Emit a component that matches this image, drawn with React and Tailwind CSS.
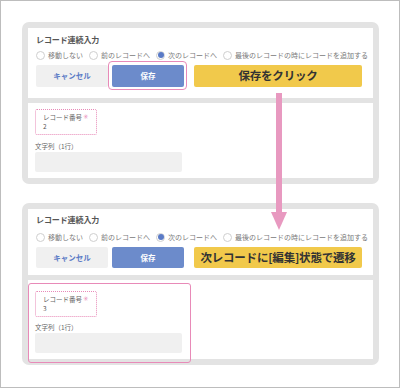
import React from "react";

function Radio({ label, checked }) {
  return (
    <div className="flex items-center gap-[3px]">
      <span className="w-[9px] h-[9px] rounded-full border border-[#cfcfcf] bg-white flex items-center justify-center">
        {checked && <span className="w-[6px] h-[6px] rounded-full bg-[#5b7bc6]" />}
      </span>
      <span className="text-[7px] leading-[10px] text-[#7a7a7a] whitespace-nowrap">{label}</span>
    </div>
  );
}

function Card({ top, banner, value, highlightSave }) {
  const s1 = top
    ? "h-[70px] pt-[7px]"
    : "h-[66px] pt-[6px]";
  const radioMt = top ? "mt-[5px]" : "mt-[7px]";
  const btnH = top ? "h-[22px]" : "h-[21px]";
  const s2 = top ? "h-[75px] pt-[6px]" : "h-[79px] pt-[11px]";
  const labelMt = top ? "mt-[7px]" : "mt-[6px]";
  return (
    <div className="w-[357px] rounded-[7px] bg-[#e3e3e3] p-[6px] flex flex-col gap-[5px]">
      <div className={`bg-white ${s1} pl-[8px] flex flex-col`}>
        <div className="text-[8px] leading-[10px] font-bold text-[#555] tracking-[-0.1px]">レコード連続入力</div>
        <div className={`${radioMt} flex items-center gap-[6px]`}>
          <Radio label="移動しない" />
          <Radio label="前のレコードへ" />
          <Radio label="次のレコードへ" checked />
          <Radio label="最後のレコードの時にレコードを追加する" />
        </div>
        <div className={`mt-[5px] flex items-center ${btnH}`}>
          <div className="w-[72px] h-full rounded-[2px] bg-[#f0f0f0] flex items-center justify-center text-[7.5px] text-[#5b7bc6] font-bold">キャンセル</div>
          <div className="relative ml-[4px] w-[72px] h-full">
            <div className="w-full h-full rounded-[2px] bg-[#6c8bcb] flex items-center justify-center text-[7.5px] text-white font-bold">保存</div>
            {highlightSave && (
              <span className="absolute -left-[4px] -top-[4px] -right-[3px] -bottom-[3px] rounded-[4px] border-[1.5px] border-[#e88ab8]" />
            )}
          </div>
          <div className="ml-[10px] w-[168px] h-full rounded-[2px] bg-[#f1c94b] flex items-center justify-center text-[#333] font-bold whitespace-nowrap text-[11.5px] tracking-[-0.2px]">
            {banner}
          </div>
        </div>
      </div>
      <div className={`bg-white ${s2} pl-[7px] flex flex-col`}>
        <div className="w-[62px] h-[26px] border-[1.5px] border-dotted border-[#e88ab8] rounded-[2px] pl-[7px] pt-[3px] flex flex-col">
          <div className="h-[9px] flex items-center text-[6.5px] leading-[9px] text-[#666] whitespace-nowrap">
            <span>レコード番号</span>
            <span className="text-[#e88ab8] text-[6.5px] leading-[9px] ml-[1px] font-['DejaVu_Sans',sans-serif]">✳</span>
          </div>
          <div className="h-[9px] text-[6.5px] leading-[9px] text-[#555]">{value}</div>
        </div>
        <div className={`${labelMt} text-[6.5px] leading-[8px] text-[#666]`}>文字列（1行）</div>
        <div className="mt-[2px] w-[147px] h-[20px] rounded-[2px] bg-[#f0f0f0]" />
      </div>
    </div>
  );
}

export default function App() {
  return (
    <div className="relative w-[400px] h-[388px] box-border border border-[#bdbdbd] bg-white pt-[21px] pl-[21px] flex flex-col gap-[19px] font-['Noto_Sans_CJK_JP','Noto_Sans',sans-serif] overflow-hidden">
      <Card top banner="保存をクリック" value="2" highlightSave />
      <Card banner="次レコードに[編集]状態で遷移" value="3" />
      <span className="absolute left-[27px] top-[282px] w-[163px] h-[80px] rounded-[3px] border-[1.5px] border-[#e88ab8]" />
      <svg className="absolute left-[270px] top-[92px]" width="16" height="138" viewBox="0 0 16 138">
        <rect x="5" y="0" width="6" height="122" fill="#e899c0" />
        <polygon points="0,119 16,119 8,137" fill="#e899c0" />
      </svg>
    </div>
  );
}
